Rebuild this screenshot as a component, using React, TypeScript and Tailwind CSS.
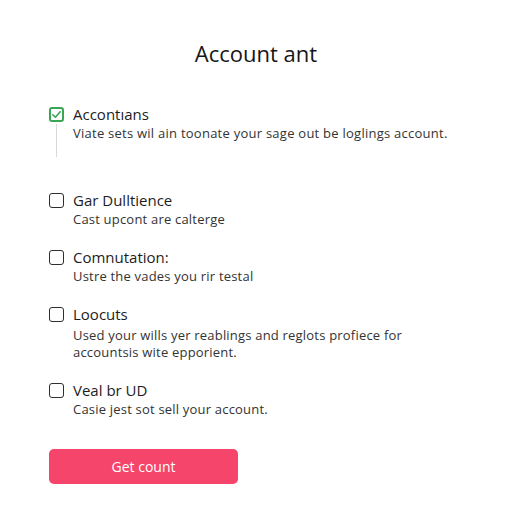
import React from "react";

const items = [
  { label: "Gar Dulltience", desc: ["Cast upcont are calterge"] },
  { label: "Comnutation:", desc: ["Ustre the vades you rir testal"] },
  {
    label: "Loocuts",
    desc: ["Used your wills yer reablings and reglots profiece for", "accountsis wite epporient."],
  },
  { label: "Veal br UD", desc: ["Casie jest sot sell your account."] },
];

function Box({ checked }: { checked?: boolean }) {
  return checked ? (
    <div className="w-[15px] h-[15px] rounded-[3px] border-2 border-[#3aa655] flex items-center justify-center shrink-0">
      <svg width="11" height="11" viewBox="0 0 12 12" fill="none">
        <path d="M2 6.3 L4.8 9 L10 3" stroke="#3aa655" strokeWidth="1.8" strokeLinecap="round" strokeLinejoin="round" />
      </svg>
    </div>
  ) : (
    <div className="w-[15px] h-[15px] rounded-[3px] border-[1.5px] border-[#2e2e2e] shrink-0" />
  );
}

export default function App() {
  return (
    <div className="w-[512px] h-[512px] bg-white text-[#1d1d1d]" style={{ fontFamily: "'Open Sans', sans-serif" }}>
      <div className="pt-[40px] text-center text-[22px] leading-[26px] text-[#161616]">Account ant</div>
      <div className="pl-[49px] pt-[40px]">
        <div className="flex gap-[9px]">
          <div className="flex flex-col items-center">
            <div className="mt-[1px]"><Box checked /></div>
            <div className="w-px h-[33px] bg-[#d8d8d8] mt-[2px]" />
          </div>
          <div>
            <div className="text-[15px] leading-[17px]">Accontıans</div>
            <div className="text-[13px] leading-[17px] mt-[2px] text-[#333] tracking-[0.25px]">Viate sets wil ain toonate your sage out be loglings account.</div>
          </div>
        </div>
        <div className="flex flex-col gap-[21px] mt-[35px]">
          {items.map((it) => (
            <div key={it.label} className="flex gap-[9px]">
              <div className="mt-[1px]"><Box /></div>
              <div>
                <div className="text-[15px] leading-[17px]">{it.label}</div>
                <div className={`text-[13px] text-[#333] tracking-[0.2px] ${it.desc.length > 1 ? "leading-[17px] mt-[4px]" : "leading-[17px] mt-[2px]"}`}>
                  {it.desc.map((d) => (
                    <div key={d}>{d}</div>
                  ))}
                </div>
              </div>
            </div>
          ))}
        </div>
        <button className="mt-[31px] w-[189px] h-[35px] rounded-[5px] bg-[#f6456a] text-white text-[14px]">Get count</button>
      </div>
    </div>
  );
}
